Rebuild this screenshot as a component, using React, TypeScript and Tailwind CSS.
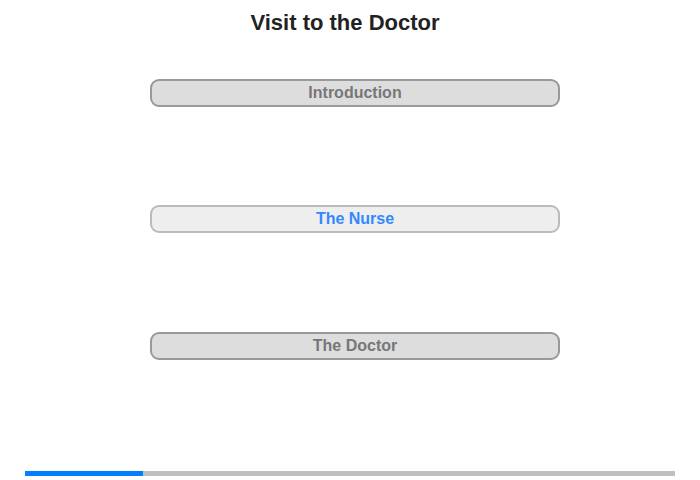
export default function App() {
  const sections = [
    { label: "Introduction", active: false, gap: "mt-[43px]" },
    { label: "The Nurse", active: true, gap: "mt-[98px]" },
    { label: "The Doctor", active: false, gap: "mt-[99px]" },
  ];

  return (
    <div className="w-[700px] h-[480px] bg-white flex flex-col font-['Liberation_Sans',Arial,sans-serif]">
      <h1 className="text-[22px] leading-[26px] font-bold text-[#222] text-center pt-[10px] pr-[10px]">
        Visit to the Doctor
      </h1>

      <div className="flex flex-col ml-[150px] w-[410px]">
        {sections.map((s) => (
          <button
            key={s.label}
            className={
              s.active
                ? `${s.gap} h-[28px] rounded-[9px] border-2 border-[#bbb] bg-[#eee] text-[#3388ff] text-[16px] font-bold`
                : `${s.gap} h-[28px] rounded-[9px] border-2 border-[#999] bg-[#ddd] text-[#777] text-[16px] font-bold`
            }
          >
            {s.label}
          </button>
        ))}
      </div>

      <div className="mt-auto mb-[4px] mx-[25px] h-[5px] bg-[#c0c0c0] flex">
        <div className="w-[118px] bg-[#007fff]" />
      </div>
    </div>
  );
}
